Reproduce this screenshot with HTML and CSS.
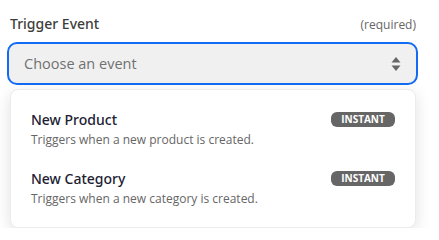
FILE: index.html
```html
<!DOCTYPE html>
<html>
<head>
    <link rel="stylesheet" href="styles.css">
</head>
<body>
    <div class="field">
        <!-- Заголовок поля -->
        <div class="field-label-row">
            <span class="field-label">Trigger Event</span>
            <span class="field-required">(required)</span>
        </div>

        <!-- Селект -->
        <div class="select-box">
            <span class="select-placeholder">Choose an event</span>
            <svg class="select-arrows" width="10" height="16" viewBox="0 0 10 16">
                <path d="M5 1 L9.5 6.5 L0.5 6.5 Z" fill="#666"/>
                <path d="M5 15 L9.5 9.5 L0.5 9.5 Z" fill="#666"/>
            </svg>
        </div>

        <!-- Выпадающий список -->
        <div class="dropdown">
            <div class="option">
                <div class="option-head">
                    <span class="option-title">New Product</span>
                    <span class="badge">INSTANT</span>
                </div>
                <div class="option-desc">Triggers when a new product is created.</div>
            </div>
            <div class="option">
                <div class="option-head">
                    <span class="option-title">New Category</span>
                    <span class="badge">INSTANT</span>
                </div>
                <div class="option-desc">Triggers when a new category is created.</div>
            </div>
        </div>
    </div>
</body>
</html>
```
FILE: styles.css
```css
* {
    margin: 0;
    padding: 0;
    box-sizing: border-box;
    font-family: "Open Sans", "Noto Sans", sans-serif;
}

body {
    background: #ffffff;
    color: #2d2e2e;
}

.field {
    padding: 14px 21px 0 7px;
    width: 439px;
}

.field-label-row {
    display: flex;
    justify-content: space-between;
    align-items: baseline;
    padding: 0 2px 0 3px;
    height: 20px;
}

.field-label {
    font-family: "Noto Sans", "Open Sans", sans-serif;
    font-size: 14px;
    font-weight: 500;
    color: #3d3d3d;
}

.field-required {
    font-size: 12px;
    color: #666;
}

/* Поле выбора */
.select-box {
    margin-top: 8px;
    height: 43px;
    border: 2px solid #136bf5;
    border-radius: 10px;
    background: #f0f0f0;
    display: flex;
    align-items: center;
    justify-content: space-between;
    padding: 0 15px 0 15px;
}

.select-placeholder {
    font-size: 14.5px;
    color: #707070;
}

.select-arrows {
    display: block;
}

/* Список вариантов */
.dropdown {
    margin: 4px 2px 0 3px;
    background: #fff;
    border-radius: 8px;
    border: 1px solid #ececec;
    box-shadow: 0 4px 16px rgba(0, 0, 0, 0.12);
    padding: 12px 20px 7px 20px;
}

.option {
    padding: 8px 0 8px 0;
    height: 59px;
}

.option-head {
    display: flex;
    justify-content: space-between;
    align-items: center;
}

.option-title {
    font-family: "Noto Sans", "Open Sans", sans-serif;
    font-size: 14px;
    font-weight: 500;
    color: #1c2233;
}

.badge {
    background: #666;
    color: #fff;
    font-size: 10px;
    font-weight: 700;
    border-radius: 6px;
    width: 64px;
    height: 15px;
    line-height: 15px;
    text-align: center;
}

.option-desc {
    margin-top: 2px;
    font-size: 12px;
    color: #666;
}
```
